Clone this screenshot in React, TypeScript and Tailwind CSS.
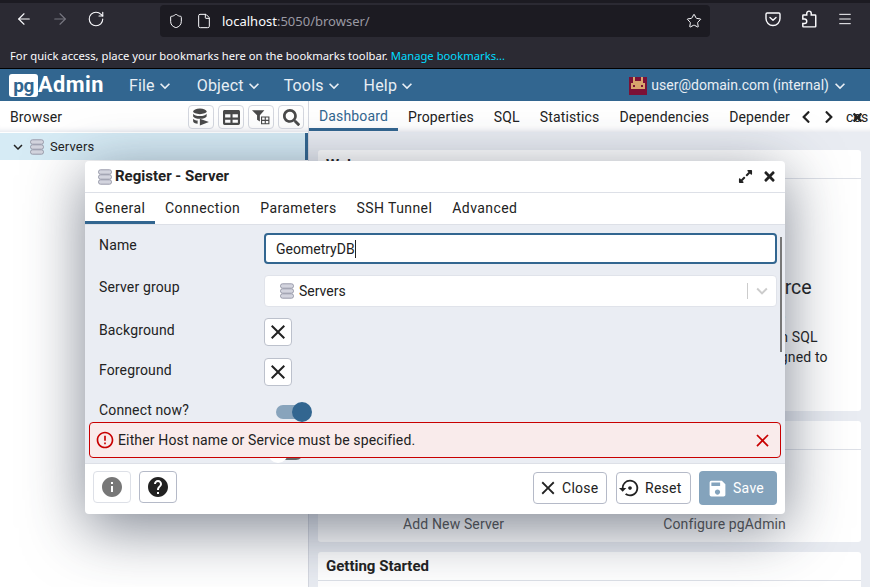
import { ArrowLeft, ArrowRight, File, Menu, RotateCw, Shield, Star } from 'lucide-react';
import { FaChevronLeft, FaChevronRight, FaExpandAlt, FaSearch, FaTable, FaTimes } from 'react-icons/fa';
import {
  MdClose,
  MdErrorOutline,
  MdExpandMore,
  MdHelp,
  MdInfo,
  MdSave,
  MdSettingsBackupRestore,
} from 'react-icons/md';

function ServerIcon({ className }: { className?: string }) {
  return (
    <svg aria-hidden className={className} fill="none" viewBox="0 0 14 16">
      <rect fill="#d3d4de" height="4.4" rx="2" stroke="#9a9cab" width="13" x="0.5" y="0.8" />
      <rect fill="#d3d4de" height="4.4" rx="2" stroke="#9a9cab" width="13" x="0.5" y="5.8" />
      <rect fill="#d3d4de" height="4.4" rx="2" stroke="#9a9cab" width="13" x="0.5" y="10.8" />
    </svg>
  );
}

function PocketIcon() {
  return (
    <svg aria-hidden className="h-4 w-4" fill="none" stroke="#fbfbfe" strokeWidth="1.4" viewBox="0 0 16 16">
      <path d="M2.2 2h11.6c.7 0 1.2.5 1.2 1.2v4.3a7 7 0 0 1-14 0V3.2C1 2.500 1.500 2 2.200 2Z" />
      <path d="M5 6.500 8 9.300l3-2.800" strokeLinecap="round" strokeLinejoin="round" />
    </svg>
  );
}

function ExtensionIcon() {
  return (
    <svg aria-hidden className="h-[18px] w-[18px]" fill="none" stroke="#fbfbfe" strokeWidth="1.3" viewBox="0 0 16 16">
      <path d="M6 4.500V3a2 2 0 1 1 4 0v1.500h3.500a.5.5 0 0 1 .5.5v9.500a.5.5 0 0 1-.5.5H3a.5.5 0 0 1-.5-.5V12H4a2 2 0 0 0 0-4H2.500V5a.5.5 0 0 1 .5-.5Z" />
    </svg>
  );
}

function QueryToolIcon() {
  return (
    <svg aria-hidden className="h-[18px] w-[18px]" viewBox="0 0 16 16">
      <ellipse cx="7" cy="3" fill="#4a4a4a" rx="6" ry="2.500" />
      <path d="M1 5c1 1.500 3 2 6 2s5-.5 6-2v2.500C12 9 10 9.500 7 9.500S2 9 1 7.500Z" fill="#4a4a4a" />
      <path d="M1 9.500c1 1 2 1.500 4 1.700V14c-2-.2-4-1-4-2.200Z" fill="#4a4a4a" />
      <path d="M7 9.500 15 12.500 7 15.500Z" fill="#4a4a4a" />
    </svg>
  );
}

function FilterTableIcon() {
  return (
    <svg aria-hidden className="h-[18px] w-[18px]" viewBox="0 0 16 16">
      <path d="M0 2h11L7 6.500V12L4.500 10.500V6.500Z" fill="#4a4a4a" />
      <path
        d="M8 7.500h7.500v7H8Zm1 1v2h2.300v-2Zm3.300 0v2h2.200v-2ZM9 11.500v2h2.300v-2Zm3.300 0v2h2.200v-2Z"
        fill="#4a4a4a"
        fillRule="evenodd"
      />
    </svg>
  );
}

function Avatar() {
  return (
    <svg aria-hidden className="h-[18px] w-[18px]" shapeRendering="crispEdges" viewBox="0 0 9 9">
      <rect fill="#7b1136" height="9" width="9" />
      <path d="M2 0h1v2h3V0h1v3h1v3H1V3h1Z" fill="#d8a56c" />
      <rect fill="#7b1136" height="1" width="1" x="2" y="4" />
      <rect fill="#7b1136" height="1" width="1" x="6" y="4" />
    </svg>
  );
}

function ToolButton({ children }: { children: React.ReactNode }) {
  return (
    <span className="flex h-6 w-[26px] items-center justify-center rounded border border-[#d5d8e0] text-[#4a4a4a]">
      {children}
    </span>
  );
}

function MenuItem({ label, className }: { label: string; className?: string }) {
  return (
    <span className={`flex items-center text-[16px] tracking-[0.01em] text-[#e8eef4] ${className ?? ''}`}>
      {label}
      <MdExpandMore className="h-5 w-5" />
    </span>
  );
}

function ColorSwatch() {
  return (
    <span className="-mt-[2px] flex h-[28px] w-[28px] items-center justify-center rounded border border-[#bcc1cc] bg-white">
      <MdClose className="h-6 w-6 text-[#222]" />
    </span>
  );
}

function FormRow({ label, children, className }: { label: string; children: React.ReactNode; className: string }) {
  return (
    <div className={`flex ${className}`}>
      <span className="w-[165px] shrink-0 text-[14px] tracking-[0.01em] text-[#222]">{label}</span>
      {children}
    </div>
  );
}

const mainTabs = ['Properties', 'SQL', 'Statistics', 'Dependencies', 'Depender'];
const dialogTabs = ['Connection', 'Parameters', 'SSH Tunnel', 'Advanced'];

export default function App() {
  return (
    <div className="relative flex h-[587px] w-[870px] flex-col overflow-hidden bg-white font-['Roboto',sans-serif]">
      <div className="h-[3px] bg-[#1c1b22]" />
      <div className="flex h-[41px] items-start bg-[#2b2a33] pt-[2px]">
        <div className="flex w-[160px] items-center gap-[18px] pl-[15px] pt-[5px]">
          <ArrowLeft className="h-[18px] w-[18px] text-[#fbfbfe]" strokeWidth={1.5} />
          <ArrowRight className="h-[18px] w-[18px] text-[#777680]" strokeWidth={1.5} />
          <RotateCw className="h-[18px] w-[18px] text-[#fbfbfe]" strokeWidth={1.5} />
        </div>
        <div className="flex h-[32px] w-[550px] items-center rounded bg-[#1c1b22] pl-[8px] pr-[8px] font-['Noto_Sans',sans-serif] text-[13px] text-[#fbfbfe]">
          <Shield className="h-4 w-4" strokeWidth={1.5} />
          <File className="ml-[12px] h-4 w-4" strokeWidth={1.5} />
          <span className="ml-[10px] pt-[2px]">
            localhost<span className="text-[#9a99a3]">:5050/browser/</span>
          </span>
          <Star className="ml-auto h-4 w-4" strokeWidth={1.5} />
        </div>
        <div className="ml-auto flex items-center gap-[19px] pr-[17px] pt-[5px] text-[#fbfbfe]">
          <PocketIcon />
          <ExtensionIcon />
          <Menu className="h-4 w-4" strokeWidth={1.5} />
        </div>
      </div>
      <div className="flex h-[25px] items-start border-b border-black bg-[#2b2a33] pl-[10px] font-['Noto_Sans',sans-serif] text-[11.25px] leading-[24px] text-[#fbfbfe]">
        <span>For quick access, place your bookmarks here on the bookmarks toolbar.</span>
        <span className="ml-[3px] text-[#00ddff]">Manage bookmarks...</span>
      </div>

      <div className="flex h-[32px] items-center bg-[#326690] pl-[9px] pr-[20px] pt-[1px]">
        <div className="flex w-[120px] items-center">
          <span className="flex h-[23px] w-[29px] items-center justify-center rounded-[3px] bg-white text-[19px] font-bold leading-none tracking-[-0.03em] text-[#326690]">
            pg
          </span>
          <span className="text-[21.750px] font-bold tracking-[0.02em] text-white">Admin</span>
        </div>
        <div className="flex gap-[20px]">
          <MenuItem className="mr-[2px]" label="File" />
          <MenuItem label="Object" />
          <MenuItem label="Tools" />
          <MenuItem label="Help" />
        </div>
        <div className="ml-auto flex items-center text-[14px] text-[#e8eef4]">
          <Avatar />
          <span className="ml-[4px]">user@domain.com (internal)</span>
          <MdExpandMore className="ml-[1px] h-5 w-5" />
        </div>
      </div>

      <div className="flex h-[31px] items-stretch bg-white text-[14px] tracking-[0.01em] text-[#222] shadow-[inset_0_-6px_6px_-6px_#d8dbe3]">
        <div className="flex w-[309px] items-center border-r border-[#d5d8e0] pl-[10px] pr-[4px] pt-[1px]">
          <span>Browser</span>
          <div className="ml-auto flex gap-1">
            <ToolButton>
              <QueryToolIcon />
            </ToolButton>
            <ToolButton>
              <FaTable className="h-[17px] w-[17px]" />
            </ToolButton>
            <ToolButton>
              <FilterTableIcon />
            </ToolButton>
            <ToolButton>
              <FaSearch className="h-[17px] w-[17px]" />
            </ToolButton>
          </div>
        </div>
        <div className="flex min-w-0 flex-1 items-stretch">
          <span className="flex h-[30px] w-[89px] items-center justify-center border-b-[3px] border-[#326690] pt-[4px] text-[#326690]">
            Dashboard
          </span>
          <div className="flex items-center gap-[20px] pl-[10px] pt-[1px]">
            {mainTabs.map((tab) => (
              <span className="whitespace-nowrap" key={tab}>
                {tab}
              </span>
            ))}
          </div>
          <div className="flex items-center pl-[9px] pt-[1px] text-[#222]">
            <FaChevronLeft className="h-[14px] w-[14px]" />
            <FaChevronRight className="ml-[9px] h-[14px] w-[14px]" />
            <span className="relative ml-[10px] whitespace-nowrap">
              ces
              <FaTimes className="absolute left-[5px] top-[4px] h-[13px] w-[13px]" />
            </span>
          </div>
        </div>
      </div>

      <div className="flex min-h-0 flex-1">
        <div className="w-[309px] border-r border-[#d5d8e0] bg-white pt-[1px]">
          <div className="flex h-[27px] items-center border-r-[3px] border-[#326690] bg-[#d6ebf5] pl-[9px] text-[13px] tracking-[0.01em] text-[#222]">
            <MdExpandMore className="h-[18px] w-[18px]" />
            <ServerIcon className="ml-[3px] h-4 w-[14px]" />
            <span className="ml-[6px] pt-[1px]">Servers</span>
          </div>
        </div>
        <div className="flex min-w-0 flex-1 flex-col gap-[10px] bg-[#e9ecf2] pl-[9px] pr-[9px] pt-[18px]">
          <div className="h-[261px] shrink-0 rounded-[3px] bg-white">
            <div className="h-[29px] border-b border-[#dde0e7] px-2 py-[4px] text-[15px] font-bold text-[#222]">
              Welcome
            </div>
            <p className="mt-[94px] text-center text-[19.500px] text-[#222]">
              Feature rich | Maximises PostgreSQL | Open Source
            </p>
            <p className="ml-[8px] mt-[5px] w-[510px] text-[14px] leading-[20px] tracking-[0.01em] text-[#222]">
              pgAdmin is an Open Source administration and management tool for the PostgreSQL database. It includes a
              graphical administration interface, an SQL query tool, a procedural code debugger and much more. The
              tool is designed to answer the needs of developers, DBAs and system administrators alike.
            </p>
          </div>
          <div className="h-[121px] shrink-0 rounded-[3px] bg-white">
            <div className="h-[29px] border-b border-[#dde0e7] px-2 py-[2px] text-[15px] font-bold text-[#222]">
              Quick Links
            </div>
            <div className="flex pt-[64px] text-[14px] tracking-[0.01em] text-[#555]">
              <span className="ml-[85px]">Add New Server</span>
              <span className="ml-[159px]">Configure pgAdmin</span>
            </div>
          </div>
          <div className="flex-1 rounded-t-[3px] bg-white">
            <div className="h-[29px] border-b border-[#dde0e7] px-2 py-[3px] text-[15px] font-bold text-[#222]">
              Getting Started
            </div>
          </div>
        </div>
      </div>

      <div className="absolute left-[85px] top-[161px] flex h-[353px] w-[700px] flex-col overflow-hidden rounded-[4px] bg-white shadow-[0_14px_60px_rgba(40,50,70,0.6)]">
        <div className="flex h-[32px] shrink-0 items-center border-b border-[#dde0e7] pl-[13px] pr-[8px]">
          <ServerIcon className="h-4 w-[14px]" />
          <span className="ml-[3px] text-[15px] font-bold text-[#222]">Register - Server</span>
          <FaExpandAlt className="ml-auto h-[15px] w-[15px] text-[#222]" />
          <FaTimes className="ml-[9px] h-[15px] w-[15px] text-[#222]" />
        </div>
        <div className="flex h-[32px] shrink-0 items-stretch border-b border-[#dde0e7] text-[14px] tracking-[0.03em] text-[#222]">
          <span className="flex w-[70px] items-center justify-center border-b-[3px] border-[#326690] pt-[2px]">
            General
          </span>
          <div className="flex items-center gap-[20px] pl-[10px]">
            {dialogTabs.map((tab) => (
              <span key={tab}>{tab}</span>
            ))}
          </div>
        </div>
        <div className="relative min-h-0 flex-1 overflow-hidden bg-[#eaedf3] pl-[14px] pr-[8px]">
          <FormRow className="pt-[10px]" label="Name">
            <div className="-mt-[2px] flex h-[31px] flex-1 items-center rounded border-2 border-[#326690] bg-white pl-[10px] text-[14px] text-[#222]">
              <span className="border-r border-[#222] leading-[18px]">GeometryDB</span>
            </div>
          </FormRow>
          <FormRow className="pt-[13px]" label="Server group">
            <div className="-mt-[2px] flex h-[32px] flex-1 items-center rounded border border-[#e0e3ea] bg-white pl-[15px] text-[14px] text-[#222]">
              <ServerIcon className="h-4 w-[14px]" />
              <span className="ml-[5px]">Servers</span>
              <span className="ml-auto h-[16px] w-px bg-[#ccc]" />
              <MdExpandMore className="mx-[3px] h-[22px] w-[22px] text-[#ccc]" />
            </div>
          </FormRow>
          <FormRow className="pt-[13px]" label="Background">
            <ColorSwatch />
          </FormRow>
          <FormRow className="pt-[14px]" label="Foreground">
            <ColorSwatch />
          </FormRow>
          <FormRow className="pt-[14px]" label="Connect now?">
            <span className="relative ml-[12px] mt-[5px] block h-[14px] w-[29px] rounded-full bg-[#88a4bc]">
              <span className="absolute left-[16px] top-[-3px] h-5 w-5 rounded-full bg-[#326690]" />
            </span>
          </FormRow>
          <FormRow className="pt-[25px]" label="">
            <span className="relative ml-[12px] block h-[14px] w-[27px] rounded-full bg-[#666]">
              <span className="absolute left-[-8px] top-[-3px] h-5 w-5 rounded-full bg-white" />
            </span>
          </FormRow>
          <span className="absolute right-[3px] top-[12px] h-[115px] w-[2px] bg-[#777]" />
          <div className="absolute bottom-[5px] left-[4px] right-[4px] flex h-[36px] items-center rounded border border-[#c80000] bg-[#f9ebeb] pl-[5px] pr-[7px] text-[14px] tracking-[0.01em] text-[#222]">
            <MdErrorOutline className="h-[20px] w-[20px] text-[#c80000]" />
            <span className="ml-[3px]">Either Host name or Service must be specified.</span>
            <MdClose className="ml-auto h-[21px] w-[21px] text-[#c80000]" />
          </div>
        </div>
        <div className="flex h-[51px] shrink-0 items-center border-t border-[#dde0e7] pb-[2px] pl-[8px] pr-[8px] text-[14px] tracking-[0.02em]">
          <span className="-mt-[2px] flex h-[32px] w-[38px] items-center justify-center rounded border border-[#dde0e7]">
            <MdInfo className="h-6 w-6 text-[#777]" />
          </span>
          <span className="-mt-[2px] ml-[8px] flex h-[32px] w-[38px] items-center justify-center rounded border border-[#b5bac8]">
            <MdHelp className="h-6 w-6 text-[#222]" />
          </span>
          <span className="ml-auto flex h-[32px] w-[74px] items-center gap-[3px] rounded border border-[#b5bac8] pl-[3px] text-[#222]">
            <MdClose className="h-[22px] w-[22px]" />
            Close
          </span>
          <span className="ml-[9px] flex h-[32px] w-[75px] items-center gap-[4px] rounded border border-[#b5bac8] pl-[2px] text-[#222]">
            <MdSettingsBackupRestore className="h-[22px] w-[22px]" />
            Reset
          </span>
          <span className="ml-[8px] flex h-[34px] w-[78px] items-center gap-[5px] rounded bg-[#84a3bc] pl-[8px] text-white">
            <MdSave className="h-[21px] w-[21px]" />
            Save
          </span>
        </div>
      </div>
    </div>
  );
}
